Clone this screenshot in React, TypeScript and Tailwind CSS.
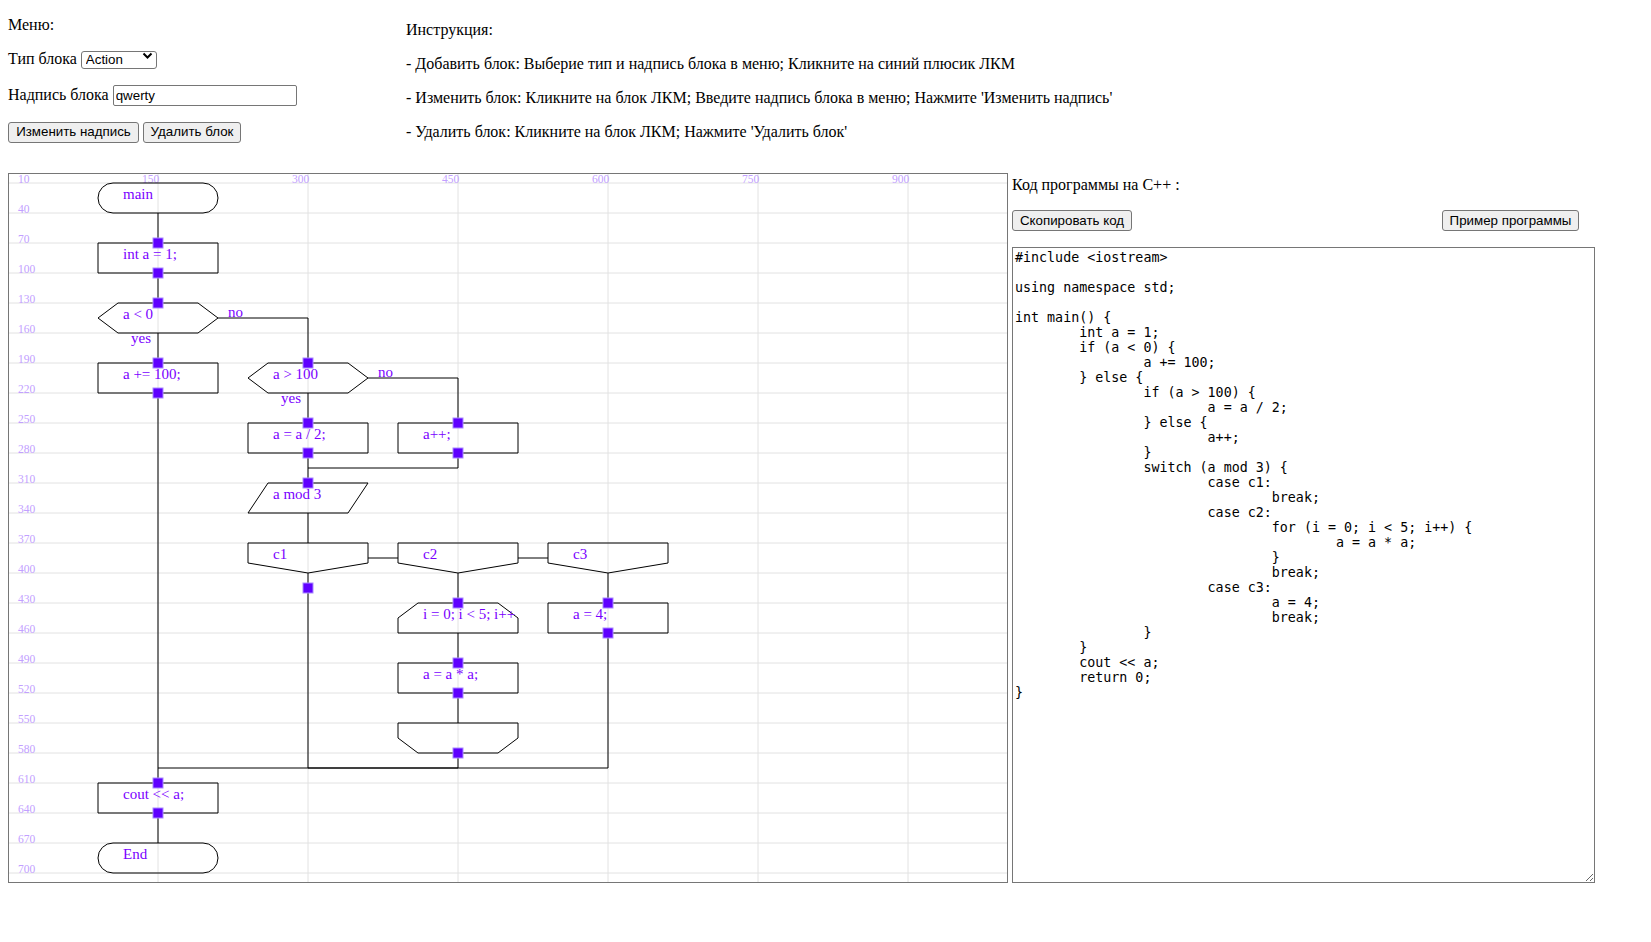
import React, { useState } from "react";

const code = `#include <iostream>

using namespace std;

int main() {
\tint a = 1;
\tif (a < 0) {
\t\ta += 100;
\t} else {
\t\tif (a > 100) {
\t\t\ta = a / 2;
\t\t} else {
\t\t\ta++;
\t\t}
\t\tswitch (a mod 3) {
\t\t\tcase c1:
\t\t\t\tbreak;
\t\t\tcase c2:
\t\t\t\tfor (i = 0; i < 5; i++) {
\t\t\t\t\ta = a * a;
\t\t\t\t}
\t\t\t\tbreak;
\t\t\tcase c3:
\t\t\t\ta = 4;
\t\t\t\tbreak;
\t\t}
\t}
\tcout << a;
\treturn 0;
}`;

type Kind = "term" | "rect" | "if" | "io" | "case" | "loopStart" | "loopEnd";

const blocks: { t: Kind; x: number; y: number; label: string }[] = [
  { t: "term", x: 90, y: 10, label: "main" },
  { t: "rect", x: 90, y: 70, label: "int a = 1;" },
  { t: "if", x: 90, y: 130, label: "a < 0" },
  { t: "rect", x: 90, y: 190, label: "a += 100;" },
  { t: "if", x: 240, y: 190, label: "a > 100" },
  { t: "rect", x: 240, y: 250, label: "a = a / 2;" },
  { t: "rect", x: 390, y: 250, label: "a++;" },
  { t: "io", x: 240, y: 310, label: "a mod 3" },
  { t: "case", x: 240, y: 370, label: "c1" },
  { t: "case", x: 390, y: 370, label: "c2" },
  { t: "case", x: 540, y: 370, label: "c3" },
  { t: "loopStart", x: 390, y: 430, label: "i = 0; i < 5; i++" },
  { t: "rect", x: 540, y: 430, label: "a = 4;" },
  { t: "rect", x: 390, y: 490, label: "a = a * a;" },
  { t: "loopEnd", x: 390, y: 550, label: "" },
  { t: "rect", x: 90, y: 610, label: "cout << a;" },
  { t: "term", x: 90, y: 670, label: "End" },
];

const lines: number[][] = [
  [150, 40, 150, 70],
  [150, 100, 150, 130],
  [150, 160, 150, 190],
  [210, 145, 300, 145, 300, 190],
  [150, 220, 150, 610],
  [300, 220, 300, 250],
  [360, 205, 450, 205, 450, 250],
  [300, 280, 300, 310],
  [450, 280, 450, 295, 300, 295],
  [300, 340, 300, 370],
  [360, 385, 390, 385],
  [510, 385, 540, 385],
  [300, 400, 300, 595],
  [450, 400, 450, 430],
  [450, 460, 450, 490],
  [450, 520, 450, 550],
  [450, 580, 450, 595],
  [600, 400, 600, 430],
  [600, 460, 600, 595],
  [150, 595, 600, 595],
  [300, 595, 450, 595],
  [150, 640, 150, 670],
];

const pins: number[][] = [
  [150, 70], [150, 100], [150, 130], [150, 190], [150, 220],
  [300, 190], [300, 250], [300, 280], [450, 250], [450, 280],
  [300, 310], [300, 415], [450, 430], [450, 490], [450, 520],
  [450, 580], [600, 430], [600, 460], [150, 610], [150, 640],
];

function shapePath(t: Kind, x: number, y: number) {
  switch (t) {
    case "if":
      return `M${x},${y + 15} L${x + 20},${y} L${x + 100},${y} L${x + 120},${y + 15} L${x + 100},${y + 30} L${x + 20},${y + 30} Z`;
    case "io":
      return `M${x + 20},${y} L${x + 120},${y} L${x + 100},${y + 30} L${x},${y + 30} Z`;
    case "case":
      return `M${x},${y} L${x + 120},${y} L${x + 120},${y + 20} L${x + 60},${y + 30} L${x},${y + 20} Z`;
    case "loopStart":
      return `M${x},${y + 15} L${x + 20},${y} L${x + 100},${y} L${x + 120},${y + 15} L${x + 120},${y + 30} L${x},${y + 30} Z`;
    case "loopEnd":
      return `M${x},${y} L${x + 120},${y} L${x + 120},${y + 15} L${x + 100},${y + 30} L${x + 20},${y + 30} L${x},${y + 15} Z`;
    default:
      return `M${x},${y} L${x + 120},${y} L${x + 120},${y + 30} L${x},${y + 30} Z`;
  }
}

const Flowchart = () => {
  const ys: number[] = [];
  for (let v = 10; v <= 700; v += 30) ys.push(v);
  const xs = [150, 300, 450, 600, 750, 900];

  return (
    <svg width={1000} height={710} className="shrink-0 block bg-white">
      {/* grid */}
      {ys.map((v) => (
        <line key={"h" + v} x1={1} y1={v} x2={999} y2={v} stroke="#e2e2e2" strokeWidth={1} />
      ))}
      {xs.map((v) => (
        <line key={"v" + v} x1={v} y1={1} x2={v} y2={709} stroke="#e2e2e2" strokeWidth={1} />
      ))}
      <g fontFamily="'Liberation Serif', serif" fontSize={11.5} fill="#c2a0ff">
        {ys.map((v) => (
          <text key={"ly" + v} x={10} y={v}>{v}</text>
        ))}
        {xs.map((v) => (
          <text key={"lx" + v} x={v - 7.5} y={10} textAnchor="middle">{v}</text>
        ))}
      </g>

      {/* connectors */}
      {lines.map((p, i) => (
        <polyline key={"l" + i} points={p.join(",")} fill="none" stroke="#000" strokeWidth={1} />
      ))}

      {/* blocks */}
      {blocks.map((b, i) =>
        b.t === "term" ? (
          <rect key={"b" + i} x={b.x} y={b.y} width={120} height={30} rx={15} fill="none" stroke="#000" strokeWidth={1} />
        ) : (
          <path key={"b" + i} d={shapePath(b.t, b.x, b.y)} fill="none" stroke="#000" strokeWidth={1} />
        )
      )}

      <g fontFamily="'Liberation Serif', serif" fontSize={15} fill="#7a00ff">
        {blocks.map((b, i) => (
          <text key={"t" + i} x={b.x + 25} y={b.y + 16}>{b.label}</text>
        ))}
        <text x={123} y={170}>yes</text>
        <text x={273} y={230}>yes</text>
        <text x={220} y={144}>no</text>
        <text x={370} y={204}>no</text>
      </g>

      {/* pins */}
      {pins.map(([x, y], i) => (
        <g key={"p" + i}>
          <rect x={x - 5.5} y={y - 5.5} width={11} height={11} fill="#a889ff" />
          <rect x={x - 4.5} y={y - 4.5} width={9} height={9} fill="#5f00ff" />
        </g>
      ))}

      <rect x={0.5} y={0.5} width={999} height={709} fill="none" stroke="#767676" strokeWidth={1} />
    </svg>
  );
};

const btn =
  "h-[21px] border border-[#767676] rounded-[3px] bg-[#efefef] px-[6px] text-[13.333px] leading-none text-black font-['Liberation_Sans',Arial,sans-serif] flex items-center justify-center";

export default function App() {
  const [kind, setKind] = useState("Action");
  const [label, setLabel] = useState("qwerty");
  const [program, setProgram] = useState(code);

  return (
    <div className="min-h-screen bg-white pl-[8px] text-[16px] text-black font-['Liberation_Serif','Times_New_Roman',serif]">
      <div className="flex h-[173px]">
        {/* menu */}
        <div className="w-[398px] shrink-0 pt-[15.5px]">
          <div className="leading-[18px]">Меню:</div>
          <div className="mt-[13.5px] flex items-baseline gap-[4px]">
            <span className="leading-[18px]">Тип блока</span>
            <div className="relative">
              <select
                value={kind}
                onChange={(e) => setKind(e.target.value)}
                className="appearance-none w-[76px] h-[18px] border border-[#767676] rounded-[3px] bg-white pl-[4px] text-[13.333px] leading-[14px] font-['Liberation_Sans',Arial,sans-serif]"
              >
                <option>Action</option>
                <option>If</option>
                <option>For</option>
                <option>Switch</option>
                <option>Input/Output</option>
              </select>
              <svg className="absolute right-[4px] top-[5px] pointer-events-none" width="11" height="8" viewBox="0 0 11 8">
                <path d="M1.5 1.5 L5.5 5.5 L9.5 1.5" fill="none" stroke="#000" strokeWidth="2" />
              </svg>
            </div>
          </div>
          <div className="mt-[13.5px] flex items-baseline gap-[4px]">
            <span className="leading-[18px]">Надпись блока</span>
            <input
              type="text"
              value={label}
              onChange={(e) => setLabel(e.target.value)}
              className="w-[184px] h-[21px] border border-[#767676] rounded-[2px] bg-white px-[2px] text-[13.333px] font-['Liberation_Sans',Arial,sans-serif]"
            />
          </div>
          <div className="mt-[16px] flex gap-[4px]">
            <button className={btn + " w-[131px]"}>Изменить надпись</button>
            <button className={btn + " w-[98px]"}>Удалить блок</button>
          </div>
        </div>

        {/* instructions */}
        <div className="pt-[21px] leading-[18px]">
          <p>Инструкция:</p>
          <p className="mt-[16px]">- Добавить блок: Выберие тип и надпись блока в меню; Кликните на синий плюсик ЛКМ</p>
          <p className="mt-[16px]">- Изменить блок: Кликните на блок ЛКМ; Введите надпись блока в меню; Нажмите 'Изменить надпись'</p>
          <p className="mt-[16px]">- Удалить блок: Кликните на блок ЛКМ; Нажмите 'Удалить блок'</p>
        </div>
      </div>

      <div className="flex items-start gap-[4px]">
        <Flowchart />

        <div className="flex flex-col w-[583px]">
          <div className="pt-[2.5px] leading-[18px]">Код программы на C++ :</div>
          <div className="mt-[16.5px] flex w-[567px]">
            <button className={btn + " w-[120px]"}>Скопировать код</button>
            <button className={btn + " w-[137px] ml-auto"}>Пример программы</button>
          </div>
          <textarea
            value={program}
            onChange={(e) => setProgram(e.target.value)}
            spellCheck={false}
            className="mt-[16px] w-[583px] h-[636px] border border-[#767676] bg-white p-[2px] text-[13.333px] leading-[15px] text-black font-['DejaVu_Sans_Mono',monospace] [tab-size:8] resize"
          />
        </div>
      </div>
    </div>
  );
}
